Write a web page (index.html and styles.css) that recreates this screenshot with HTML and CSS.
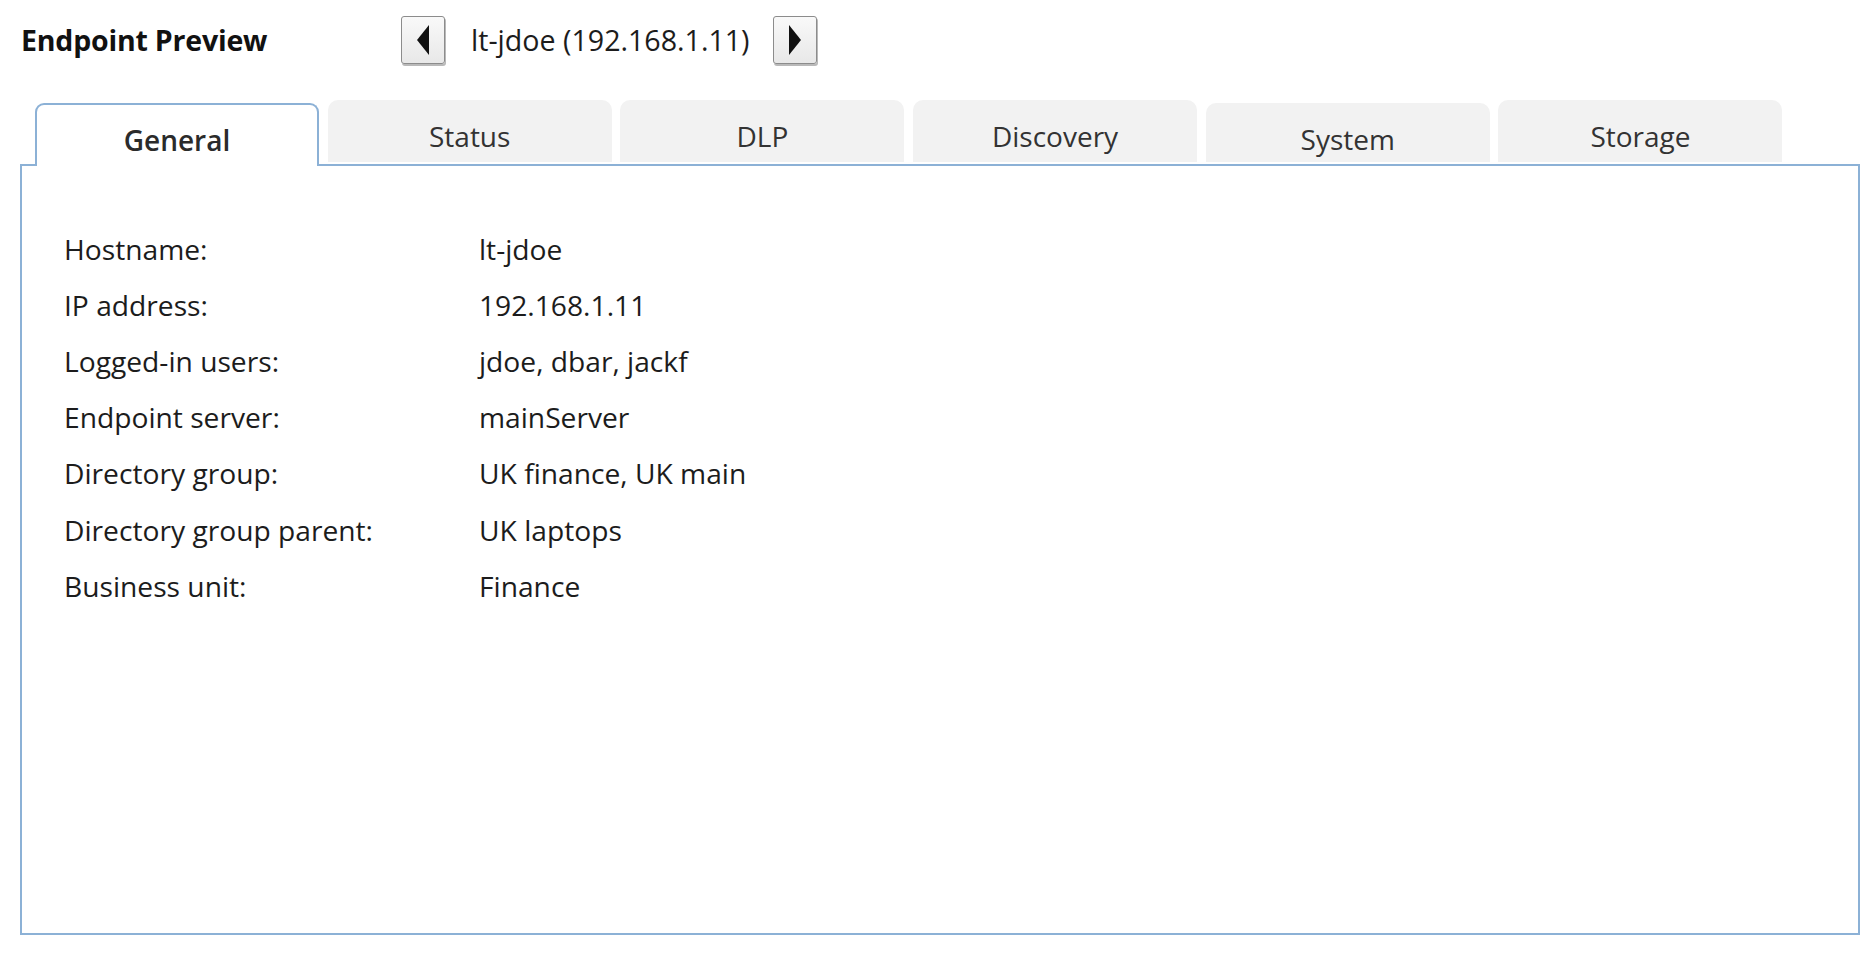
FILE: index.html
```html
<!DOCTYPE html>
<html lang="en">
<head>
<meta charset="utf-8">
<title>Endpoint Preview</title>
<link rel="stylesheet" href="styles.css">
</head>
<body>
<div class="page">
  <div class="header">
    <h1 class="title">Endpoint Preview</h1>
    <div class="nav">
      <button class="nav-btn" type="button" aria-label="Previous">
        <svg width="12" height="30" viewBox="0 0 12 30"><path d="M0 15 L12 0 L12 30 Z" fill="#111"/></svg>
      </button>
      <span class="host">lt-jdoe (192.168.1.11)</span>
      <button class="nav-btn" type="button" aria-label="Next">
        <svg width="12" height="30" viewBox="0 0 12 30"><path d="M12 15 L0 0 L0 30 Z" fill="#111"/></svg>
      </button>
    </div>
  </div>
  <div class="tabs">
    <div class="tab active">General</div>
    <div class="tab">Status</div>
    <div class="tab">DLP</div>
    <div class="tab">Discovery</div>
    <div class="tab tab-low">System</div>
    <div class="tab">Storage</div>
  </div>
  <div class="panel">
    <dl class="props">
      <dt>Hostname:</dt><dd>lt-jdoe</dd>
      <dt>IP address:</dt><dd>192.168.1.11</dd>
      <dt>Logged-in users:</dt><dd>jdoe, dbar, jackf</dd>
      <dt>Endpoint server:</dt><dd>mainServer</dd>
      <dt>Directory group:</dt><dd>UK finance, UK main</dd>
      <dt>Directory group parent:</dt><dd>UK laptops</dd>
      <dt>Business unit:</dt><dd>Finance</dd>
    </dl>
  </div>
</div>
</body>
</html>
```

FILE: styles.css
```css
* { box-sizing: border-box; }

body {
  margin: 0;
  background: #ffffff;
  font-family: "Open Sans", "Lato", sans-serif;
  color: #1c1c1c;
}

.page {
  padding-left: 20px;
  width: 1860px;
}

.header {
  display: flex;
  align-items: center;
  height: 79px;
  padding-left: 1px;
}

.title {
  margin: 0;
  width: 380px;
  font-size: 28.5px;
  font-weight: 700;
  color: #111;
  letter-spacing: -0.2px;
}

.nav {
  display: flex;
  align-items: center;
}

.nav-btn {
  width: 44px;
  height: 48px;
  margin: 0;
  padding: 0;
  display: flex;
  align-items: center;
  justify-content: center;
  border: 1px solid #8c8c8c;
  border-radius: 3px;
  background: linear-gradient(#f9f9f9, #e8e8e8);
  box-shadow: 1px 2px 0 #b9b9b9;
}

.host {
  margin: 0 23px 0 26px;
  font-size: 28.6px;
  color: #1c1c1c;
}

.tabs {
  display: flex;
  align-items: flex-end;
  gap: 8.7px;
  height: 85px;
  padding: 21px 0 0 15px;
}

.tab {
  width: 284px;
  height: 62px;
  margin-bottom: 2px;
  padding-top: 10px;
  display: flex;
  align-items: center;
  justify-content: center;
  background: #f2f2f2;
  border-radius: 10px 10px 0 0;
  font-size: 28px;
  color: #333;
}

.tab-low {
  height: 59px;
  padding-top: 13px;
}

.tab.active {
  position: relative;
  z-index: 1;
  height: 63px;
  margin-bottom: -2px;
  padding-top: 8px;
  background: #fff;
  border: 2px solid #8cb1d6;
  border-bottom: none;
  border-radius: 9px 9px 0 0;
  font-weight: 600;
  color: #2b2b2b;
}

.panel {
  width: 1840px;
  height: 771px;
  border: 2px solid #8cb1d6;
  padding: 55px 0 0 42px;
}

.props {
  margin: 0;
  display: grid;
  grid-template-columns: 415px auto;
  grid-auto-rows: 56.1px;
  align-items: center;
  font-size: 28.2px;
  color: #1c1c1c;
}

.props dt,
.props dd {
  margin: 0;
}
```
